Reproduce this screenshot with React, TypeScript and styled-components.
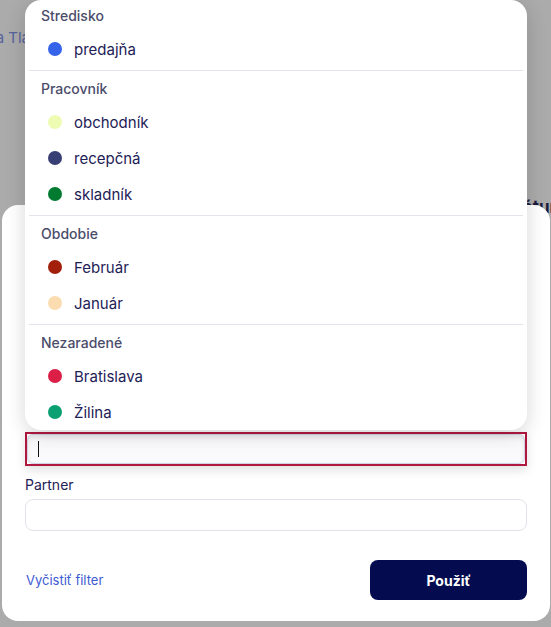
import React from "react"
import styled, { createGlobalStyle } from "styled-components"

const GlobalStyle = createGlobalStyle`
  * { box-sizing: border-box; }
  body {
    margin: 0;
    font-family: Inter, "Noto Sans", sans-serif;
    background: #ababab;
  }
`

const Page = styled.div`
  width: 551px;
  height: 627px;
  overflow: hidden;
  display: flex;
  flex-direction: column;
  background: #ababab;
`

// page behind the dimmed overlay, mostly covered by the sheet
const BackTop = styled.div`
  height: 205px;
  display: flex;
  flex-direction: column;
  justify-content: space-between;
  padding-top: 28px;
`

const BackLinks = styled.div`
  margin-left: -8px;
  font-size: 15px;
  color: #56639b;
  white-space: nowrap;
`

const BackTitle = styled.div`
  align-self: flex-end;
  margin-right: -14px;
  margin-bottom: -12px;
  font-size: 17px;
  font-weight: 700;
  color: #1b1c3c;
`

const Sheet = styled.div`
  position: relative;
  height: 416px;
  margin: 0 1px 0 2px;
  padding: 0 23px 21px;
  background: #fff;
  border-radius: 16px;
  display: flex;
  flex-direction: column;
  justify-content: flex-end;
`

const Field = styled.div`
  position: relative;
`

const FocusRing = styled.div`
  height: 34px;
  border: 2px solid #b0183f;
  box-shadow: 0 4px 10px rgba(0, 0, 0, 0.12);
`

const FocusedBox = styled.div`
  height: 100%;
  border: 1px solid #cfd3e4;
  border-radius: 6px;
  background: #fafafc;
  box-shadow: inset 0 2px 5px rgba(0, 0, 0, 0.08);
  display: flex;
  align-items: center;
  padding-left: 10px;
`

const Caret = styled.span`
  width: 1px;
  height: 16px;
  background: #111;
`

const Label = styled.div`
  margin-top: 9px;
  font-size: 14px;
  line-height: 20px;
  color: #1e2156;
`

const TextBox = styled.div`
  margin-top: 4px;
  height: 32px;
  border: 1px solid #e2e3ea;
  border-radius: 8px;
  background: #fff;
`

const Footer = styled.div`
  margin-top: 29px;
  display: flex;
  justify-content: space-between;
  align-items: center;
`

const ClearLink = styled.a`
  margin-left: 1px;
  font-size: 13px;
  color: #3d5bd2;
  text-decoration: none;
`

const ApplyButton = styled.button`
  width: 157px;
  height: 40px;
  border: 0;
  border-radius: 8px;
  background: #040c4f;
  color: #fff;
  font-family: Inter, "Noto Sans", sans-serif;
  font-size: 14px;
  font-weight: 700;
`

const Popover = styled.div`
  position: absolute;
  left: 0;
  right: 0;
  bottom: calc(100% + 2px);
  background: #fff;
  border-radius: 16px;
  box-shadow: 0 4px 20px rgba(0, 0, 0, 0.16);
  overflow: hidden;
`

const Group = styled.div<{ $last?: boolean }>`
  padding-bottom: ${(p) => (p.$last ? "0" : "3px")};
`

const Divider = styled.hr`
  margin: 0 4px;
  border: 0;
  border-top: 1px solid #e4e4ec;
`

const GroupHeader = styled.div<{ $first?: boolean }>`
  padding: ${(p) => (p.$first ? "6px" : "8px")} 16px 5px;
  font-size: 14px;
  font-weight: 500;
  line-height: 20px;
  color: #4b4d6b;
`

const Option = styled.div`
  height: 36px;
  display: flex;
  align-items: center;
  gap: 12px;
  padding-left: 23px;
  font-size: 15px;
  color: #1e2156;
`

const Dot = styled.span<{ $color: string }>`
  flex: none;
  width: 14px;
  height: 14px;
  border-radius: 50%;
  background: ${(p) => p.$color};
`

const groups = [
  { title: "Stredisko", items: [{ label: "predajňa", color: "#3563e9" }] },
  {
    title: "Pracovník",
    items: [
      { label: "obchodník", color: "#eefbb3" },
      { label: "recepčná", color: "#383f74" },
      { label: "skladník", color: "#027a30" },
    ],
  },
  {
    title: "Obdobie",
    items: [
      { label: "Február", color: "#a11f0b" },
      { label: "Január", color: "#fbdcb1" },
    ],
  },
  {
    title: "Nezaradené",
    items: [
      { label: "Bratislava", color: "#dc1f46" },
      { label: "Žilina", color: "#0aa071" },
    ],
  },
]

const App = (): React.ReactElement => {
  return (
    <>
      <GlobalStyle />
      <Page>
        <BackTop>
          <BackLinks>ia Tlačiť</BackLinks>
          <BackTitle>Dátum</BackTitle>
        </BackTop>
        <Sheet>
          <Field>
            <Popover>
              {groups.map((g, i) => (
                <React.Fragment key={g.title}>
                  {i > 0 && <Divider />}
                  <Group $last={i === groups.length - 1}>
                    <GroupHeader $first={i === 0}>{g.title}</GroupHeader>
                    {g.items.map((it) => (
                      <Option key={it.label}>
                        <Dot $color={it.color} />
                        {it.label}
                      </Option>
                    ))}
                  </Group>
                </React.Fragment>
              ))}
            </Popover>
            <FocusRing>
              <FocusedBox>
                <Caret />
              </FocusedBox>
            </FocusRing>
          </Field>
          <Label>Partner</Label>
          <TextBox />
          <Footer>
            <ClearLink href="#">Vyčistiť filter</ClearLink>
            <ApplyButton>Použiť</ApplyButton>
          </Footer>
        </Sheet>
      </Page>
    </>
  )
}

export default App
